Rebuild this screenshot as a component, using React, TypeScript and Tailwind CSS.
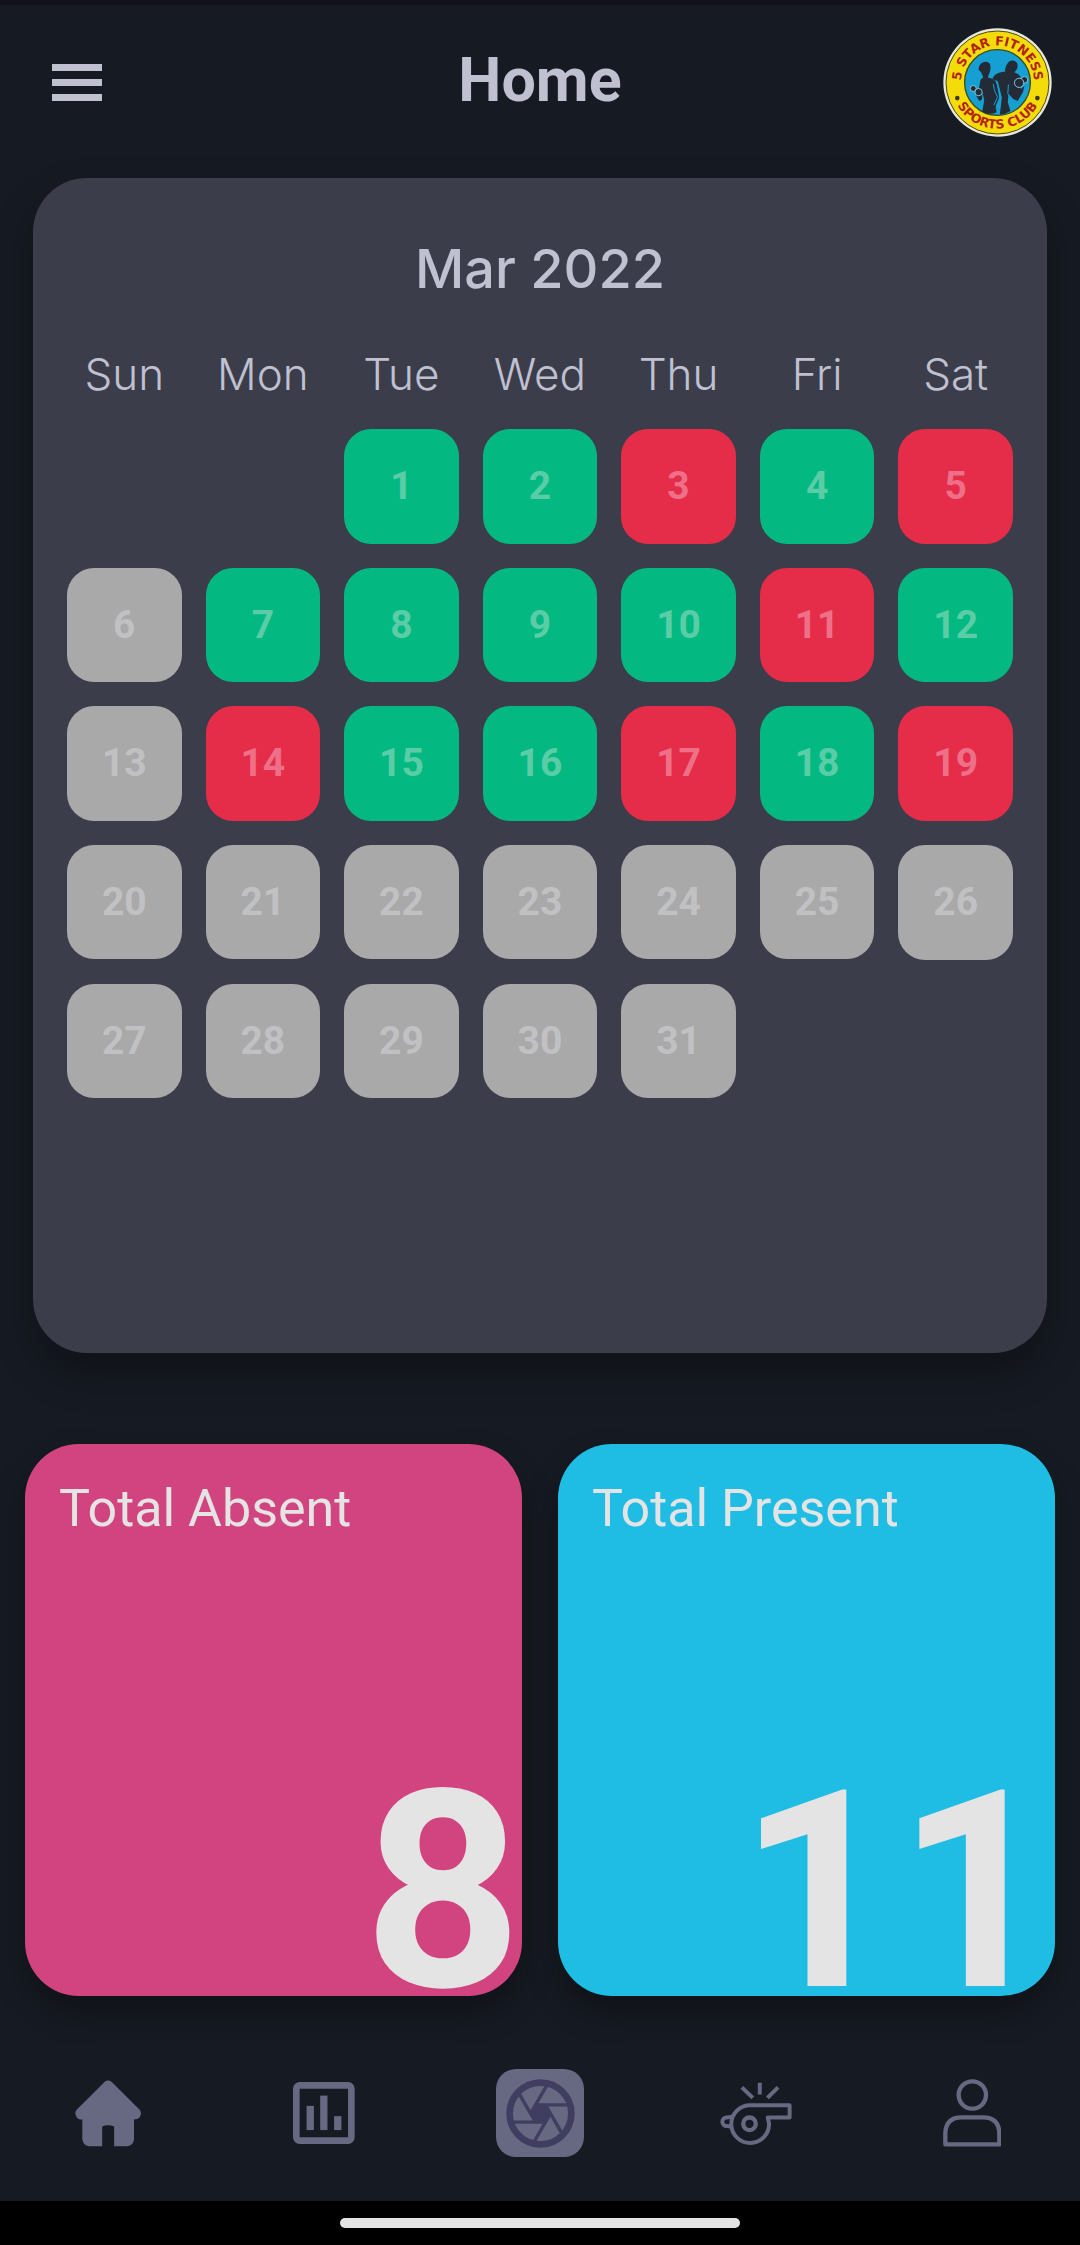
type Status = "present" | "absent" | "none";

const WEEKDAYS = ["Sun", "Mon", "Tue", "Wed", "Thu", "Fri", "Sat"];
const FIRST_WEEKDAY = 2;
const DAYS_IN_MONTH = 31;
const PRESENT = [1, 2, 4, 7, 8, 9, 10, 12, 15, 16, 18];
const ABSENT = [3, 5, 11, 14, 17, 19];

const statusClass: Record<Status, string> = {
  present: "bg-[#03b981] text-[#5acda7]",
  absent: "bg-[#e52d49] text-[#ee7088]",
  none: "bg-[#a9a9a9] text-[#c1c1c3]",
};

function statusOf(day: number): Status {
  if (PRESENT.includes(day)) return "present";
  if (ABSENT.includes(day)) return "absent";
  return "none";
}

function buildWeeks(): (number | null)[][] {
  const weeks: (number | null)[][] = [];
  for (let start = 1 - FIRST_WEEKDAY; start <= DAYS_IN_MONTH; start += 7) {
    weeks.push(
      WEEKDAYS.map((_, i) => {
        const day = start + i;
        return day >= 1 && day <= DAYS_IN_MONTH ? day : null;
      }),
    );
  }
  return weeks;
}

function ClubLogo() {
  return (
    <svg viewBox="69 52 328 328" className="size-[109px]" role="img" aria-label="5 Star Fitness Sports Club">
      <defs>
        <path id="logo-top" d="M125 235 A110 110 0 1 1 341 235" />
        <path id="logo-bottom" d="M94 216 A139 139 0 0 0 372 216" />
      </defs>
      <circle cx="233" cy="216" r="163" fill="#e9e8dd" />
      <circle cx="233" cy="216" r="155" fill="#f3dc09" stroke="#4a4713" strokeWidth="3" />
      <circle cx="233" cy="216" r="99" fill="#159fd3" stroke="#3b4a22" strokeWidth="4" />
      <g fill="#232c36" strokeLinejoin="round">
        <path d="M176 178 C176 160 190 151 202 154 C213 156 214 170 210 184 C208 192 204 196 205 202 C220 204 230 210 232 226 L238 262 L228 286 L230 306 Q208 315 187 304 L193 270 L188 244 L186 268 L178 272 L168 254 L176 240 L182 208 L190 200 L184 186 Z" />
        <path d="M256 176 C260 158 270 148 280 150 C292 152 296 162 292 174 C290 180 286 182 284 186 C298 190 304 198 305 212 L303 236 L314 226 L310 244 L294 272 L280 266 L266 250 L264 276 L272 302 Q256 313 240 313 L246 262 L234 212 L218 206 C222 190 240 184 256 184 Z" />
      </g>
      <g fill="none" stroke="#159fd3" strokeWidth="3">
        <path d="M229 212 Q240 240 243 262 Q240 280 228 294" />
        <path d="M220 220 L224 240 L233 260 L222 284" />
        <path d="M266 222 L264 250 L274 262" />
      </g>
      <g fill="#232c36" stroke="#7cc4e0" strokeWidth="3">
        <circle cx="160" cy="234" r="9" />
        <circle cx="176" cy="245" r="11" />
        <circle cx="314" cy="208" r="10" />
        <circle cx="298" cy="217" r="14" />
      </g>
      <circle cx="112" cy="263" r="7" fill="#3c3a12" />
      <circle cx="353" cy="263" r="7" fill="#3c3a12" />
      <g fill="#b3240f" fontFamily="DejaVu Sans" fontWeight="700" fontSize="38" textAnchor="middle">
        <text>
          <textPath href="#logo-top" startOffset="50%">5 STAR FITNESS</textPath>
        </text>
        <text>
          <textPath href="#logo-bottom" startOffset="50%">SPORTS CLUB</textPath>
        </text>
      </g>
    </svg>
  );
}

function HomeIcon() {
  return (
    <svg viewBox="104 118 200 202" className="h-[67px]" fill="currentColor" aria-hidden="true">
      <path d="M193 124 Q204 115 215 124 L299 208 Q307 218 299 230 Q294 237 282 237 V296 Q280 316 262 318 H222 V258 Q204 251 186 258 V318 H146 Q128 316 126 296 V237 Q113 237 109 230 Q101 218 109 208 Z" />
    </svg>
  );
}

function ReportIcon() {
  return (
    <svg viewBox="759 125 186 187" className="h-[62px]" fill="currentColor" aria-hidden="true">
      <rect x="769" y="135" width="166" height="167" rx="10" fill="none" stroke="currentColor" strokeWidth="20" />
      <rect x="800" y="197" width="22" height="73" />
      <rect x="841" y="166" width="22" height="104" />
      <rect x="883" y="228" width="22" height="42" />
    </svg>
  );
}

function ApertureIcon() {
  return (
    <svg viewBox="-104 -104 208 208" className="size-[69px]" fill="none" stroke="currentColor" aria-hidden="true">
      <circle r="93" strokeWidth="20" />
      <polygon points="-15,-26 15,-26 30,0 15,26 -15,26 -30,0" fill="currentColor" />
      {[0, 60, 120, 180, 240, 300].map((angle) => (
        <path key={angle} d="M86 -26 H-10" strokeWidth="10" transform={`rotate(${angle})`} />
      ))}
    </svg>
  );
}

function WhistleIcon() {
  return (
    <svg
      viewBox="750 124 217 190"
      className="h-[63px]"
      fill="none"
      stroke="currentColor"
      strokeWidth="12"
      strokeLinejoin="round"
      aria-hidden="true"
    >
      <path d="M838 194 H960 V231 H894 L898 250 A57 57 0 1 1 838 194 Z" />
      <circle cx="839" cy="250" r="19" strokeWidth="13" />
      <path d="M788 228 Q779 231 770 231 A13 13 0 0 0 770 257 Q778 257 785 259" />
      <path d="M816 140 L849 172 M870 126 V162 M925 140 L893 172" />
    </svg>
  );
}

function ProfileIcon() {
  return (
    <svg viewBox="188 117 176 204" className="h-[68px]" fill="none" stroke="currentColor" strokeWidth="13" aria-hidden="true">
      <circle cx="276" cy="165" r="41" />
      <path d="M195 313 V279 Q197 232 244 232 H308 Q355 232 357 279 V313 Z" strokeLinejoin="round" />
    </svg>
  );
}

function StatCard({ label, value, color }: { label: string; value: number; color: string }) {
  return (
    <section
      className={`flex min-h-[552px] flex-1 flex-col justify-between rounded-[54px] shadow-[0_16px_32px_rgba(0,0,0,0.3)] ${color}`}
    >
      <h2 className="px-[34px] pt-[33px] text-[52px] leading-16 text-[#e4e4e4]">{label}</h2>
      <p className="text-right text-[276px] leading-[208px] font-bold text-[#e4e4e4]">{value}</p>
    </section>
  );
}

const NAV = [
  { label: "Home", icon: <HomeIcon /> },
  { label: "Reports", icon: <ReportIcon /> },
  {
    label: "Scan",
    icon: (
      <span className="flex size-[88px] items-center justify-center rounded-[20px] bg-[#666981] text-[#403e60]">
        <ApertureIcon />
      </span>
    ),
  },
  { label: "Trainer", icon: <WhistleIcon /> },
  { label: "Profile", icon: <ProfileIcon /> },
];

export default function App() {
  return (
    <div className="flex min-h-screen flex-col border-t-[5px] border-[#10131b] bg-[#161a22] font-['Roboto',sans-serif] text-[#bfc0d0]">
      <header className="grid h-[154px] grid-cols-3 items-center px-7">
        <button type="button" aria-label="Open menu" className="ml-6 flex w-[50px] flex-col gap-2">
          <span className="h-[7px] bg-current" />
          <span className="h-[7px] bg-current" />
          <span className="h-[7px] bg-current" />
        </button>
        <h1 className="pb-1 text-center text-[61px] leading-none font-bold">Home</h1>
        <div className="flex justify-end">
          <ClubLogo />
        </div>
      </header>

      <main className="flex-1">
        <section className="mx-[33px] mt-[19px] min-h-[1175px] rounded-[54px] bg-[#3c3d4b] px-2.5 pt-[59px] shadow-[0_20px_40px_rgba(0,0,0,0.3)]">
          <h2 className="mb-[18px] text-center font-['Inter',sans-serif] text-[54px] leading-16 font-medium">Mar 2022</h2>
          <table className="w-full table-fixed border-separate border-spacing-6">
            <thead>
              <tr className="h-[62px] font-['Inter',sans-serif] text-[44px] leading-none">
                {WEEKDAYS.map((name) => (
                  <th key={name} scope="col" className="p-0 font-light">
                    {name}
                  </th>
                ))}
              </tr>
            </thead>
            <tbody>
              {buildWeeks().map((week, w) => (
                <tr key={w}>
                  {week.map((day, i) => (
                    <td key={i} className="p-0">
                      {day !== null && (
                        <button
                          type="button"
                          className={`flex aspect-square w-full items-center justify-center rounded-[27px] text-[39px] font-bold ${statusClass[statusOf(day)]}`}
                        >
                          {day}
                        </button>
                      )}
                    </td>
                  ))}
                </tr>
              ))}
            </tbody>
          </table>
        </section>

        <div className="mt-[91px] flex gap-9 px-[25px]">
          <StatCard label="Total Absent" value={8} color="bg-[#d24480]" />
          <StatCard label="Total Present" value={11} color="bg-[#1fbce3]" />
        </div>
      </main>

      <nav className="mt-[29px] grid h-44 grid-cols-5 text-[#666981]">
        {NAV.map((item) => (
          <button key={item.label} type="button" aria-label={item.label} className="flex items-center justify-center">
            {item.icon}
          </button>
        ))}
      </nav>

      <div className="flex h-11 items-center justify-center bg-black">
        <div className="h-2.5 w-[37%] rounded-full bg-[#e4e4e4]" />
      </div>
    </div>
  );
}
